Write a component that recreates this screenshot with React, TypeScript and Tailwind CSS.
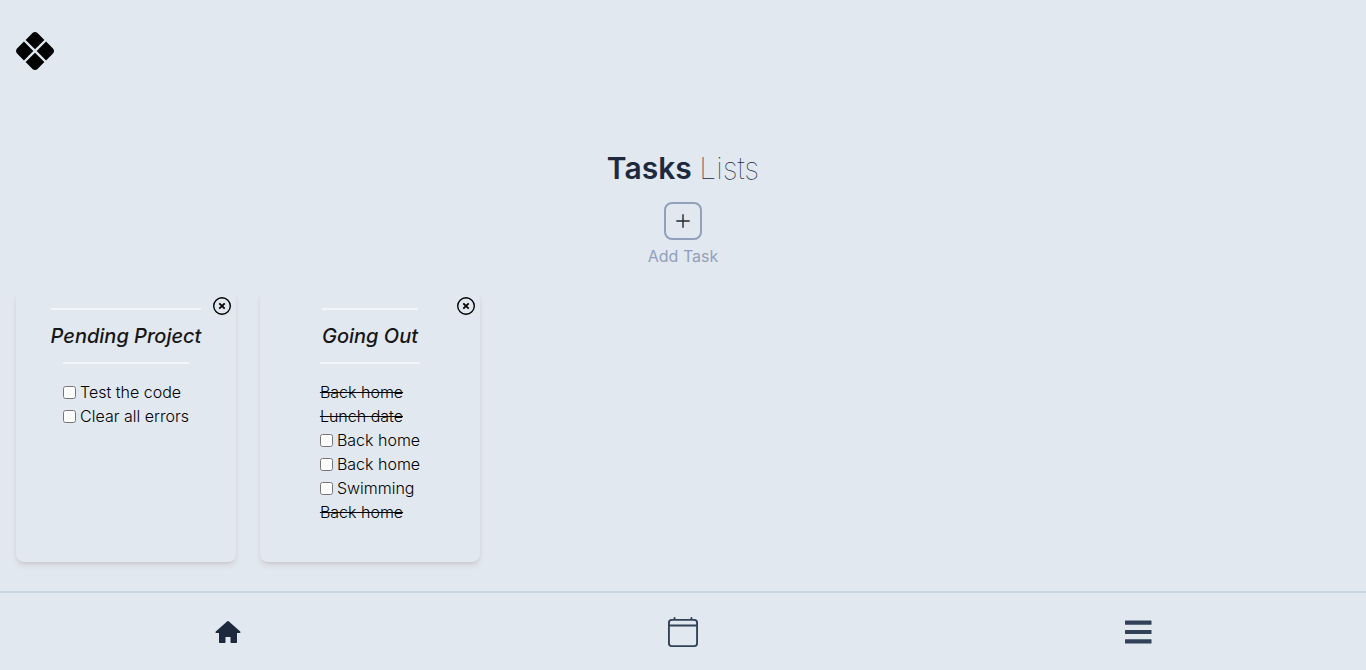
import { useState } from "react";
import { BsCalendar4, BsXDiamondFill } from "react-icons/bs";

type Task = { id: number; label: string; done: boolean };
type TaskList = { id: number; title: string; tasks: Task[] };

const initialLists: TaskList[] = [
  {
    id: 1,
    title: "Pending Project",
    tasks: [
      { id: 1, label: "Test the code", done: false },
      { id: 2, label: "Clear all errors", done: false },
    ],
  },
  {
    id: 2,
    title: "Going Out",
    tasks: [
      { id: 1, label: "Back home", done: true },
      { id: 2, label: "Lunch date", done: true },
      { id: 3, label: "Back home", done: false },
      { id: 4, label: "Back home", done: false },
      { id: 5, label: "Swimming", done: false },
      { id: 6, label: "Back home", done: true },
    ],
  },
];

function HomeIcon() {
  return (
    <svg viewBox="0 0 26 24" className="h-6 w-[26px]" fill="currentColor" aria-hidden="true">
      <path d="M12.3 1.3a1 1 0 0 1 1.4 0L25.2 11.6c.6.6.4 1.4-.5 1.4H22v9.3a.7.7 0 0 1-.7.7h-5.1a.7.7 0 0 1-.7-.7V17h-5v5.3a.7.7 0 0 1-.7.7H4.7a.7.7 0 0 1-.7-.7V13H1.3c-.9 0-1.1-.8-.5-1.4z" />
    </svg>
  );
}

function MenuIcon() {
  return (
    <svg viewBox="0 0 28 24" className="h-6 w-7" fill="currentColor" aria-hidden="true">
      <rect x="1" y="0.5" width="26.5" height="4.2" rx="0.5" />
      <rect x="1" y="10" width="26.5" height="4" rx="0.5" />
      <rect x="1" y="19.3" width="26.5" height="4.2" rx="0.5" />
    </svg>
  );
}

function CloseIcon() {
  return (
    <svg viewBox="0 0 22 22" className="size-[22px]" fill="none" stroke="currentColor" aria-hidden="true">
      <circle cx="11" cy="11" r="8.3" strokeWidth="1.4" />
      <path d="M8.3 8.3l5.4 5.4M13.7 8.3l-5.4 5.4" strokeWidth="1.8" />
    </svg>
  );
}

function TaskCard({
  list,
  onRemove,
  onComplete,
}: {
  list: TaskList;
  onRemove: () => void;
  onComplete: (taskId: number) => void;
}) {
  return (
    <article className="relative flex min-h-68 w-[220px] flex-col items-center rounded-lg px-4 pt-[18px] pb-6 shadow-md shadow-red-950/10">
      <button
        type="button"
        aria-label={`Remove ${list.title}`}
        onClick={onRemove}
        className="absolute top-[5px] right-[3px] text-black"
      >
        <CloseIcon />
      </button>
      <h2 className="border-t-2 border-slate-100 py-3 text-xl font-medium text-neutral-900 italic">
        {list.title}
      </h2>
      <ul className="border-t-2 border-slate-100 pt-4 font-light text-black">
        {list.tasks.map((task) => (
          <li key={task.id}>
            {task.done ? (
              <span className="line-through">{task.label}</span>
            ) : (
              <label className="flex items-center gap-1">
                <input
                  type="checkbox"
                  checked={false}
                  onChange={() => onComplete(task.id)}
                  className="size-[13px]"
                />
                {task.label}
              </label>
            )}
          </li>
        ))}
      </ul>
    </article>
  );
}

export default function App() {
  const [lists, setLists] = useState(initialLists);

  const removeList = (id: number) => setLists(lists.filter((list) => list.id !== id));

  const completeTask = (listId: number, taskId: number) =>
    setLists(
      lists.map((list) =>
        list.id === listId
          ? {
              ...list,
              tasks: list.tasks.map((task) => (task.id === taskId ? { ...task, done: true } : task)),
            }
          : list,
      ),
    );

  return (
    <div className="flex min-h-screen flex-col bg-slate-200 font-['Inter',sans-serif] text-base">
      <header className="flex px-4 pt-8">
        <a href="#" aria-label="Home page" className="text-[38px] text-black">
          <BsXDiamondFill />
        </a>
      </header>

      <main className="flex-1 px-4 pt-20 pb-6">
        <section className="flex flex-col items-center">
          <h1 className="text-3xl font-semibold text-slate-800">
            Tasks <span className="font-thin">Lists</span>
          </h1>
          <button
            type="button"
            aria-labelledby="add-task"
            className="mt-4 flex size-[38px] items-center justify-center rounded-lg border-2 border-slate-400 text-neutral-800"
          >
            <svg viewBox="0 0 14 14" className="size-3.5" stroke="currentColor" strokeWidth="1.4" aria-hidden="true">
              <path d="M7 0.3v13.4M0.3 7h13.4" />
            </svg>
          </button>
          <p id="add-task" className="mt-1 text-slate-400">
            Add Task
          </p>
        </section>

        <section className="mt-[22px] flex flex-wrap gap-6">
          {lists.map((list) => (
            <TaskCard
              key={list.id}
              list={list}
              onRemove={() => removeList(list.id)}
              onComplete={(taskId) => completeTask(list.id, taskId)}
            />
          ))}
        </section>
      </main>

      <nav className="grid grid-cols-3 border-t-2 border-slate-300 pt-6 pb-[23px] text-slate-700">
        <a href="#home" aria-label="Home" className="flex items-center justify-center text-slate-800">
          <HomeIcon />
        </a>
        <a href="#calendar" aria-label="Calendar" className="flex items-center justify-center text-[30px]">
          <BsCalendar4 />
        </a>
        <button type="button" aria-label="Menu" className="flex items-center justify-center">
          <MenuIcon />
        </button>
      </nav>
    </div>
  );
}
